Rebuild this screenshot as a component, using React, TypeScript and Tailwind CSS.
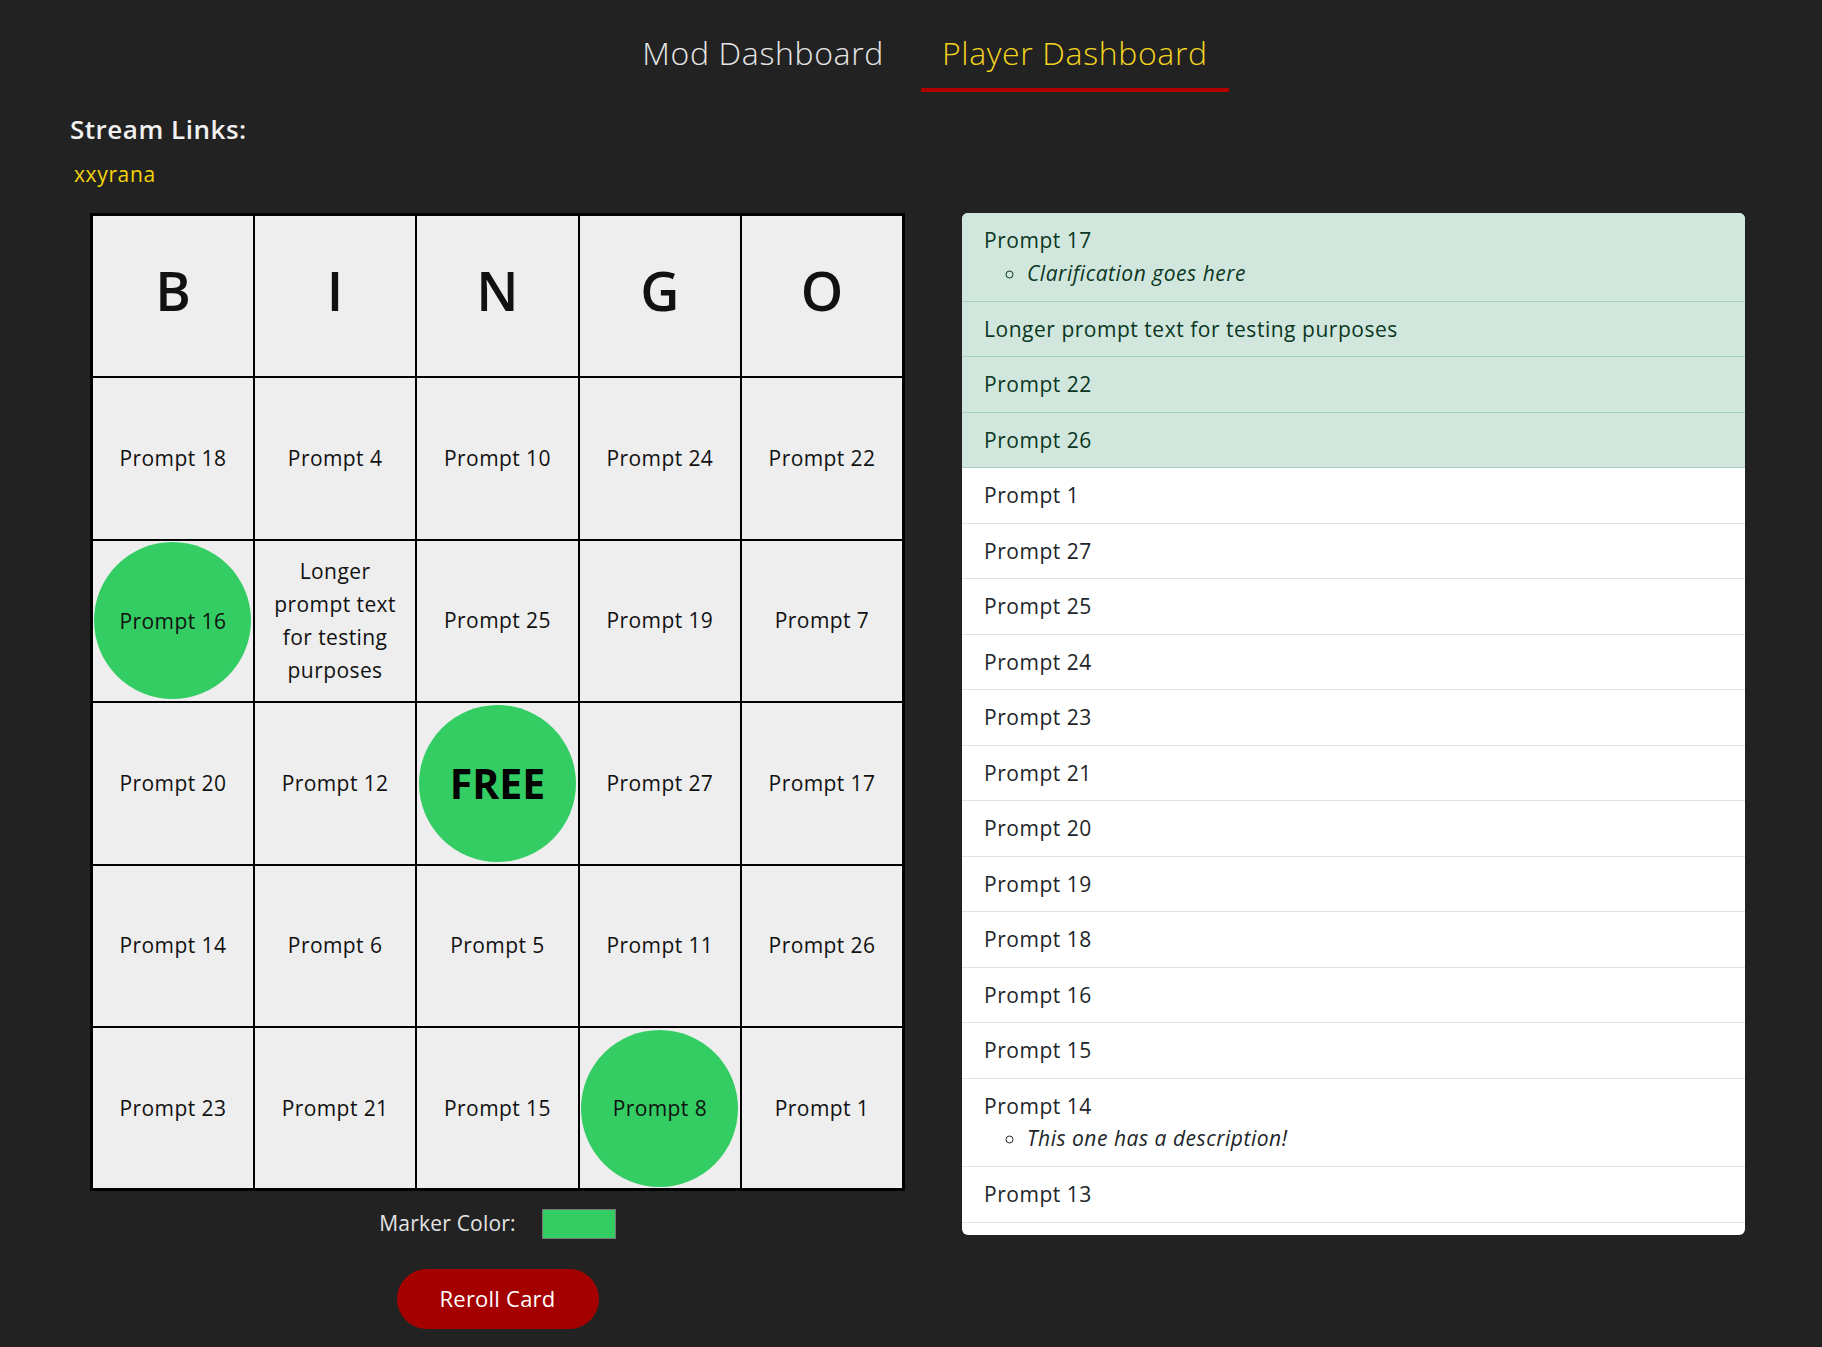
import React from "react";

const card: string[][] = [
  ["Prompt 18", "Prompt 4", "Prompt 10", "Prompt 24", "Prompt 22"],
  ["Prompt 16", "Longer prompt text for testing purposes", "Prompt 25", "Prompt 19", "Prompt 7"],
  ["Prompt 20", "Prompt 12", "FREE", "Prompt 27", "Prompt 17"],
  ["Prompt 14", "Prompt 6", "Prompt 5", "Prompt 11", "Prompt 26"],
  ["Prompt 23", "Prompt 21", "Prompt 15", "Prompt 8", "Prompt 1"],
];

const marked = new Set(["1-0", "2-2", "4-3"]);

const prompts: { text: string; note?: string; done?: boolean }[] = [
  { text: "Prompt 17", note: "Clarification goes here", done: true },
  { text: "Longer prompt text for testing purposes", done: true },
  { text: "Prompt 22", done: true },
  { text: "Prompt 26", done: true },
  { text: "Prompt 1" },
  { text: "Prompt 27" },
  { text: "Prompt 25" },
  { text: "Prompt 24" },
  { text: "Prompt 23" },
  { text: "Prompt 21" },
  { text: "Prompt 20" },
  { text: "Prompt 19" },
  { text: "Prompt 18" },
  { text: "Prompt 16" },
  { text: "Prompt 15" },
  { text: "Prompt 14", note: "This one has a description!" },
  { text: "Prompt 13" },
  { text: "Prompt 12" },
  { text: "Prompt 11" },
];

function BingoCard() {
  return (
    <table className="w-[815px] table-fixed border-collapse border-[3px] border-black bg-[#eeeeee] text-center text-[#111]">
      <thead>
        <tr>
          {["B", "I", "N", "G", "O"].map((l) => (
            <th key={l} className="h-[162.5px] border-2 border-black pb-[12px] text-[54px] font-semibold">
              {l}
            </th>
          ))}
        </tr>
      </thead>
      <tbody>
        {card.map((row, r) => (
          <tr key={r}>
            {row.map((cell, c) => {
              const hit = marked.has(`${r}-${c}`);
              const free = cell === "FREE";
              return (
                <td key={c} className="h-[162.5px] border-2 border-black p-0 align-middle">
                  {hit ? (
                    <div className="mx-auto flex h-[157px] w-[157px] items-center justify-center rounded-full bg-[#33cd63]">
                      {free ? (
                        <span className="text-[41px] font-bold text-black">FREE</span>
                      ) : (
                        <span className="text-[21px] leading-[32px] tracking-[0.02em]">{cell}</span>
                      )}
                    </div>
                  ) : (
                    <span className="block px-3 text-[21px] leading-[33px] tracking-[0.02em]">{cell}</span>
                  )}
                </td>
              );
            })}
          </tr>
        ))}
      </tbody>
    </table>
  );
}

export default function App() {
  return (
    <div className="min-h-[1347px] bg-[#222222] font-['Open_Sans',sans-serif]">
      <nav className="flex justify-center gap-4 pt-[29px] pl-[28px]">
        <a className="border-b-4 border-transparent px-[21px] pb-[11px] text-[32px] font-light leading-[48px] tracking-[0.02em] text-[#e6e6e6]">
          Mod Dashboard
        </a>
        <a className="border-b-4 border-[#b00000] px-[21px] pb-[11px] text-[32px] font-light leading-[48px] tracking-[0.02em] text-[#f2d41f]">
          Player Dashboard
        </a>
      </nav>

      <div className="px-[70px]">
        <h2 className="mt-[19px] text-[26px] font-semibold leading-[36px] tracking-[0.02em] text-[#f1f1f1]">
          Stream Links:
        </h2>
        <p className="mt-[12px] pl-[4px] text-[21px] leading-[30px] tracking-[0.03em] text-[#f5d50a]">xxyrana</p>
      </div>

      <div className="mt-[24px] flex items-start gap-[57px] pl-[90px]">
        <div className="flex w-[815px] flex-col items-center">
          <BingoCard />
          <div className="mt-[17px] flex items-center gap-[26px]">
            <span className="text-[21px] tracking-[0.01em] text-[#e4e4e4]">Marker Color:</span>
            <span className="h-[30px] w-[74px] border border-[#777] bg-[#33cd63]" />
          </div>
          <button className="mt-[29px] h-[60px] w-[202px] rounded-full bg-[#a50000] text-[22px] tracking-[0.01em] text-white">
            Reroll Card
          </button>
        </div>

        <ul className="h-[1022px] w-[783px] overflow-hidden rounded-[6px] bg-white text-[21px] tracking-[0.025em]">
          {prompts.map((p, i) => (
            <li
              key={i}
              className={
                p.done
                  ? "border-b border-[#a3cfbb] bg-[#d1e7dd] px-[22px] py-[12px] leading-[30.5px] text-[#0a3622]"
                  : "border-b border-[#dee2e6] px-[22px] py-[12px] leading-[30.5px] text-[#212529]"
              }
            >
              {p.text}
              {p.note && (
                <ul className="mt-[2px] list-[circle] pl-[43px]">
                  <li className="italic leading-[31px]">{p.note}</li>
                </ul>
              )}
            </li>
          ))}
        </ul>
      </div>
    </div>
  );
}
